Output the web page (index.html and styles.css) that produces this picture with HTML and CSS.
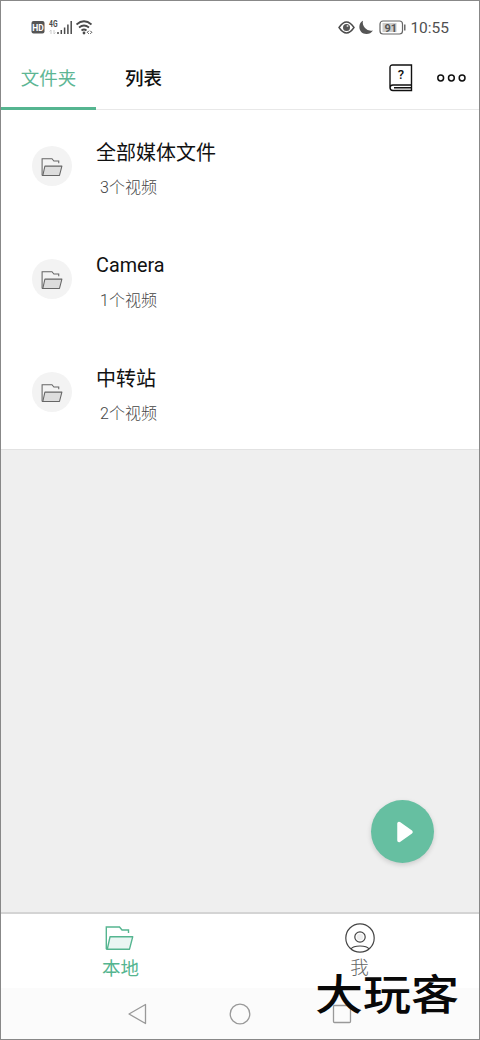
FILE: index.html
```
<!DOCTYPE html>
<html lang="zh-CN">
<head>
<meta charset="utf-8">
<title>文件夹</title>
<link rel="stylesheet" href="styles.css">
</head>
<body>
<svg class="defs" width="0" height="0">
  <symbol id="folder" viewBox="0 0 28 24">
    <path class="shape" d="M.8 23.200V1H14l2.500 3H23v3M.8 23.200h2"/>
    <path class="fill" d="M1.800 23.200 4.500 10.800h22.700L24 23.200Z"/>
  </symbol>
</svg>
<div class="screen">
  <header class="status">
    <svg class="status-left" width="64" height="20" viewBox="0 0 64 20">
      <rect x="0.500" y="5" width="13" height="12.500" rx="2" fill="#555"/>
      <text x="7" y="14.500" class="hd">HD</text>
      <text x="18" y="10.500" class="net" textLength="8.500" lengthAdjust="spacingAndGlyphs">4G</text>
      <path d="M20 18v-4l-1.500 1.500M23 14v4l1.500-1.500" fill="none" stroke="#ccc"/>
      <path d="M27 18v-2M30.300 18v-4M33.600 18v-6.500M36.900 18V8.500M40.200 18V5" fill="none" stroke="#4a4a4a" stroke-width="1.500"/>
      <g fill="none" stroke="#4a4a4a" stroke-width="1.700"><path d="M45.500 8.500q7.500-6.500 15 0M48 11.500q5-4 10 0M50.500 14.500q2.500-2 5 0"/></g>
      <circle cx="53" cy="17" r="1.400" fill="#4a4a4a"/>
      <path d="m57.800 14.800-1.500 1.500 1.500 1.500m1.500-3 1.500 1.500-1.500 1.500" fill="none" stroke="#4a4a4a"/>
    </svg>
    <div class="status-right">
      <svg width="70" height="20" viewBox="0 0 70 20">
        <path d="M2 11.500q7.500-11 15 0-7.500 11-15 0Z" fill="none" stroke="#4a4a4a" stroke-width="1.400"/>
        <circle cx="9.500" cy="11.500" r="3.500" fill="#555"/><circle cx="10.500" cy="10" r="1" fill="#ccc"/>
        <path d="M26 4.800C20.500 7 21 18 29.500 18q4 0 6.500-3.500Q31 15.500 28 12T26 4.800Z" fill="#555"/>
        <rect x="43" y="5" width="22.500" height="13" rx="3" fill="#fff" stroke="#666" stroke-width="1.200"/>
        <rect x="45.500" y="7" width="14" height="9" fill="#ccc"/>
        <text x="53.700" y="15.500" class="battery">91</text>
        <path d="M67.800 8.500v6" stroke="#555" stroke-width="1.300"/>
      </svg>
      <span class="time">10:55</span>
    </div>
  </header>
  <nav class="tabs">
    <div class="tab active">文件夹</div>
    <div class="tab">列表</div>
    <div class="actions">
      <svg width="24" height="28" viewBox="0 0 24 28">
        <path d="M3.500 1H22.500v25.500H4q-3 0-3-3V3.500Q1 1 3.500 1ZM22.500 21H4q-3 0-3 3M5 23.800h17" fill="none" stroke="#111" stroke-width="1.400"/>
        <text x="11.800" y="15" class="help">?</text>
      </svg>
      <svg width="30" height="10" viewBox="0 0 30 10"><g fill="none" stroke="#111" stroke-width="1.500"><circle cx="3.700" cy="5" r="2.900"/><circle cx="14.400" cy="5" r="2.900"/><circle cx="25.100" cy="5" r="2.900"/></g></svg>
    </div>
  </nav>
  <main class="list">
    <div class="row"><span class="disc"><svg class="folder"><use href="#folder"/></svg></span><div class="info"><div class="name">全部媒体文件</div><div class="count">3个视频</div></div></div>
    <div class="row"><span class="disc"><svg class="folder"><use href="#folder"/></svg></span><div class="info"><div class="name latin">Camera</div><div class="count">1个视频</div></div></div>
    <div class="row"><span class="disc"><svg class="folder"><use href="#folder"/></svg></span><div class="info"><div class="name">中转站</div><div class="count">2个视频</div></div></div>
  </main>
  <section class="blank">
    <button class="play" aria-label="播放"><svg width="18" height="24" viewBox="0 0 18 24"><path d="M3 3.500v17L15 12Z" fill="#fff" stroke="#fff" stroke-width="3.500" stroke-linejoin="round"/></svg></button>
  </section>
  <nav class="bottom">
    <div class="item local"><svg class="folder"><use href="#folder"/></svg><span>本地</span></div>
    <div class="item me">
      <svg width="30" height="30" viewBox="0 0 30 30"><g fill="none" stroke="#444" stroke-width="1.200"><circle cx="15" cy="15" r="14.200"/><circle cx="15" cy="14" r="5.200" /><path d="M6 26q2-3 9-3t9 3"/></g><circle cx="15" cy="14" r="3.200" fill="#eee"/></svg>
      <span>我</span>
    </div>
  </nav>
  <footer class="system">
    <svg width="240" height="24" viewBox="0 0 240 24"><g fill="none" stroke="#999" stroke-width="1.300" stroke-linejoin="round"><path d="M17.500 2.500v19L1 12Z"/><circle cx="112" cy="12" r="9.800"/><rect x="205.500" y="3.500" width="17" height="17" rx="1"/></g></svg>
  </footer>
  <div class="watermark">大玩客</div>
</div>
</body>
</html>
```

FILE: styles.css
```
* { box-sizing: border-box; }
body { margin: 0; font-family: Roboto, "Noto Sans CJK SC", sans-serif; }
.defs { position: absolute; }
.screen {
  position: relative;
  display: flex;
  flex-direction: column;
  width: 480px;
  height: 1040px;
  border: 1px solid #888;
  background: #fff;
  overflow: hidden;
}
.status {
  display: flex;
  justify-content: space-between;
  height: 46px;
  padding: 15px 30px 0 30px;
}
.status-right { display: flex; gap: 3px; height: 22px; }
.time { font-size: 15.500px; line-height: 24px; color: #505050; }
.hd { font: bold 8.500px Roboto, sans-serif; fill: #fff; text-anchor: middle; }
.net { font: bold 8.500px Roboto, sans-serif; fill: #4a4a4a; }
.battery { font: bold 11px Roboto, sans-serif; fill: #555; text-anchor: middle; }
.tabs {
  display: flex;
  height: 63px;
  border-bottom: 1px solid #e8e8e8;
  font-size: 18.500px;
  line-height: 65px;
  color: #111;
}
.tab { width: 95px; height: 63px; text-align: center; font-weight: 500; }
.tab.active { color: #5db694; border-bottom: 3px solid #55b590; font-weight: 400; }
.actions { display: flex; flex: 1; justify-content: flex-end; align-items: center; gap: 24px; padding-right: 12px; }
.help { font: 500 13px Roboto, sans-serif; fill: #111; text-anchor: middle; }
.list { height: 340px; border-bottom: 1px solid #e2e2e2; }
.row { display: flex; height: 113px; padding: 36px 0 0 31px; }
.disc { display: flex; align-items: center; justify-content: center; width: 40px; height: 40px; padding-top: 1px; border-radius: 50%; background: #f3f3f3; }
.folder { fill: none; }
.disc .folder { width: 22px; height: 18px; color: #666; --tint: #ddd; }
.shape { fill: none; stroke: currentColor; stroke-width: 1.400; }
.fill { fill: var(--tint); stroke: currentColor; stroke-width: 1.400; stroke-linejoin: round; }
.info { margin: -8px 0 0 24px; }
.name { height: 30px; font-size: 20px; line-height: 30px; color: #111; }
.latin { line-height: 30px; font-size: 19.800px; }
.count { margin: 8px 0 0 4px; font-size: 16px; line-height: 24px; font-weight: 300; color: #444; }
.blank { display: flex; flex: 1; justify-content: flex-end; align-items: flex-end; padding: 0 45px 49px 0; background: #efefef; }
.play { display: flex; align-items: center; justify-content: center; width: 63px; height: 63px; padding: 0 0 0 4px; border: 0; border-radius: 50%; background: #66bfa1; box-shadow: 0 2px 5px rgba(0, 0, 0, 0.15); }
.bottom { display: flex; height: 76px; border-top: 2px solid #d4d4d4; background: #fff; }
.item { display: flex; flex: 1; flex-direction: column; align-items: center; font-size: 18.500px; line-height: 26px; }
.local { padding-top: 12px; color: #55b590; }
.local .folder { width: 29px; height: 24px; margin-right: 3px; --tint: #eaf6f3; }
.local span { margin-top: 6px; }
.me { padding-top: 9px; color: #666; }
.me span { margin-top: 2px; font-weight: 300; }
.system { display: flex; justify-content: center; height: 51px; padding: 14px 0 0 16px; background: #fbfbfb; }
.watermark {
  position: absolute;
  left: 314px;
  top: 957px;
  font: 500 48px/68px "Noto Sans CJK SC", sans-serif;
  color: #080808;
  white-space: nowrap;
  transform: scaleY(0.88);
}
```
